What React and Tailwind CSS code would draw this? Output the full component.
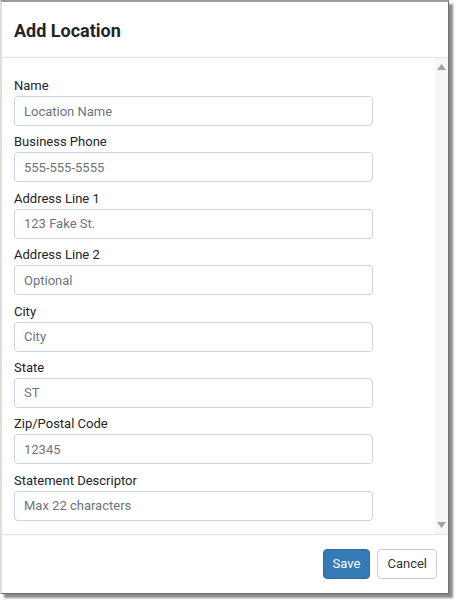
const FIELDS = [
  { label: "Name", placeholder: "Location Name" },
  { label: "Business Phone", placeholder: "555-555-5555" },
  { label: "Address Line 1", placeholder: "123 Fake St." },
  { label: "Address Line 2", placeholder: "Optional" },
  { label: "City", placeholder: "City" },
  { label: "State", placeholder: "ST" },
  { label: "Zip/Postal Code", placeholder: "12345" },
  { label: "Statement Descriptor", placeholder: "Max 22 characters" },
];

function Field({ label, placeholder }) {
  return (
    <div className="flex flex-col">
      <label className="text-[13px] leading-[20px] font-normal text-[#212529]">{label}</label>
      <input
        type="text"
        placeholder={placeholder}
        className="w-[359px] h-[30px] rounded-[4px] border border-[#ced4da] bg-white px-[9px] text-[13px] text-[#495057] placeholder:text-[#6c757d] outline-none"
      />
    </div>
  );
}

function ScrollBar() {
  return (
    <div className="w-[13px] bg-[#f7f7f7] flex flex-col items-center justify-between py-[6px]">
      <svg width="9" height="6" viewBox="0 0 9 6">
        <path d="M4.5 0 L9 6 L0 6 Z" fill="#a3a3a3" />
      </svg>
      <svg width="9" height="6" viewBox="0 0 9 6">
        <path d="M0 0 L9 0 L4.5 6 Z" fill="#a3a3a3" />
      </svg>
    </div>
  );
}

export default function App() {
  return (
    <div className="w-[460px] h-[604px] bg-white font-['Roboto',sans-serif]">
      <div className="w-[449px] h-[594px] flex flex-col bg-white border-t-2 border-t-[#9a9a9a] border-l-2 border-l-[#dedede] border-r border-r-[#6f6f6f] border-b border-b-[#6f6f6f] shadow-[4px_4px_2px_rgba(0,0,0,0.45)]">
        <div className="h-[56px] border-b border-[#dee2e6] flex items-center px-[12px] pt-[1px]">
          <h2 className="text-[18px] font-bold text-[#212529]">Add Location</h2>
        </div>
        <div className="flex-1 flex min-h-0">
          <div className="flex-1 flex flex-col gap-[6.4px] pl-[12px] pt-[18px]">
            {FIELDS.map((f) => (
              <Field key={f.label} {...f} />
            ))}
          </div>
          <ScrollBar />
        </div>
        <div className="h-[59px] border-t border-[#dee2e6] flex items-start justify-end gap-[7px] pr-[11px] pt-[14px]">
          <button className="h-[30px] px-[9px] rounded-[4px] bg-[#337ab7] border border-[#2e6da4] text-white text-[13px]">
            Save
          </button>
          <button className="h-[30px] px-[9px] rounded-[4px] bg-white border border-[#cccccc] text-[#333333] text-[13px]">
            Cancel
          </button>
        </div>
      </div>
    </div>
  );
}
